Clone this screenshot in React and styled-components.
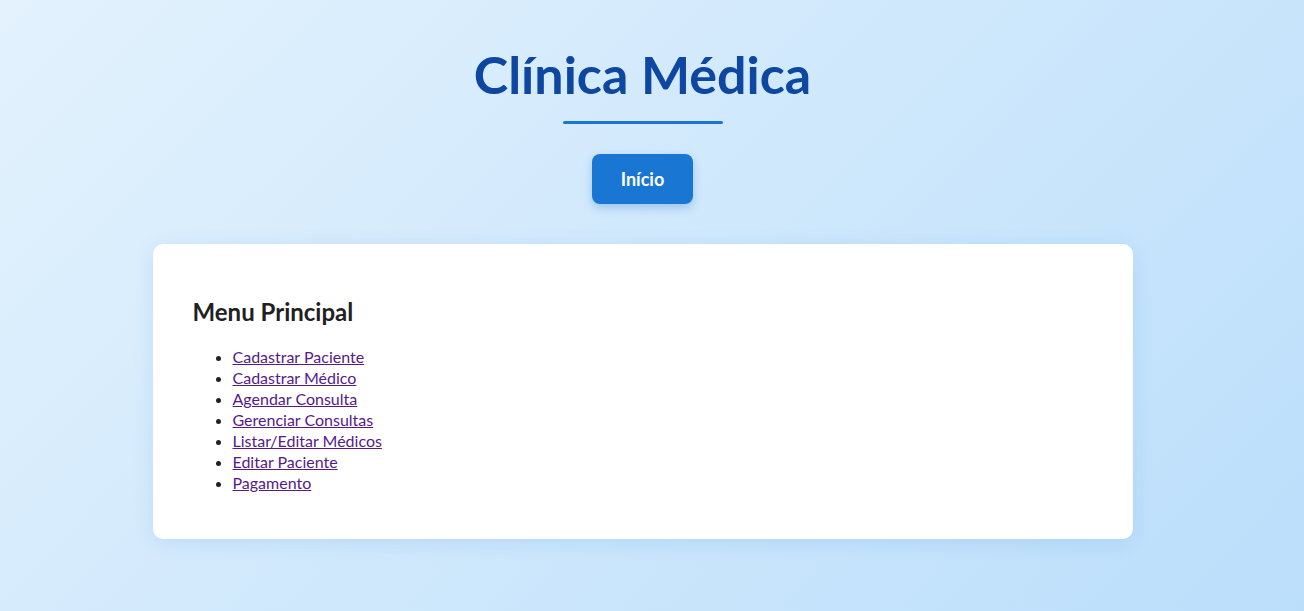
import React from 'react';
import styled, { createGlobalStyle } from 'styled-components';

const GlobalStyle = createGlobalStyle`
  html, body {
    margin: 0;
    padding: 0;
  }
  body {
    font-family: Lato, "Open Sans", sans-serif;
    background: linear-gradient(135deg, #e3f2fd 0%, #bbdefb 100%);
    min-height: 100vh;
    color: #212121;
  }
`;

// the original leaves room for a scrollbar on the right
const Page = styled.div`
  min-height: 611px;
  display: flex;
  flex-direction: column;
  align-items: center;
  padding: 40px 19px 0 0;
  box-sizing: border-box;
`;

const Header = styled.header`
  display: flex;
  flex-direction: column;
  align-items: center;
`;

const Title = styled.h1`
  margin: 0;
  font-size: 52px;
  line-height: 68px;
  font-weight: 700;
  color: #0d47a1;
`;

const Rule = styled.div`
  width: 160px;
  height: 3px;
  border-radius: 2px;
  background: #1976d2;
  margin-top: 13px;
`;

const Nav = styled.nav`
  margin-top: 30px;
`;

const NavButton = styled.button`
  background: #1976d2;
  color: #fff;
  border: none;
  border-radius: 8px;
  padding: 12px 29px;
  font-family: inherit;
  font-size: 18px;
  line-height: 26px;
  font-weight: 700;
  cursor: pointer;
  box-shadow: 0 4px 10px rgba(25, 118, 210, 0.3);
`;

const Card = styled.main`
  margin-top: 40px;
  width: 980px;
  background: #fff;
  border-radius: 10px;
  padding: 36px 40px 30px;
  box-sizing: border-box;
  box-shadow: 0 4px 20px rgba(25, 118, 210, 0.12);
`;

const CardTitle = styled.h2`
  margin: 16px 0 18px;
  font-size: 24px;
  line-height: 32px;
  font-weight: 700;
`;

const MenuList = styled.ul`
  margin: 0 0 16px;
  padding-left: 40px;
  font-size: 16px;
  line-height: 21px;
`;

const MenuLink = styled.a`
  color: #551a8b;
`;

const items = [
  'Cadastrar Paciente',
  'Cadastrar Médico',
  'Agendar Consulta',
  'Gerenciar Consultas',
  'Listar/Editar Médicos',
  'Editar Paciente',
  'Pagamento',
];

export default function App() {
  return (
    <>
      <GlobalStyle />
      <Page>
        <Header>
          <Title>Clínica Médica</Title>
          <Rule />
        </Header>
        <Nav>
          <NavButton>Início</NavButton>
        </Nav>
        <Card>
          <CardTitle>Menu Principal</CardTitle>
          <MenuList>
            {items.map((label) => (
              <li key={label}>
                <MenuLink href="#">{label}</MenuLink>
              </li>
            ))}
          </MenuList>
        </Card>
      </Page>
    </>
  );
}
